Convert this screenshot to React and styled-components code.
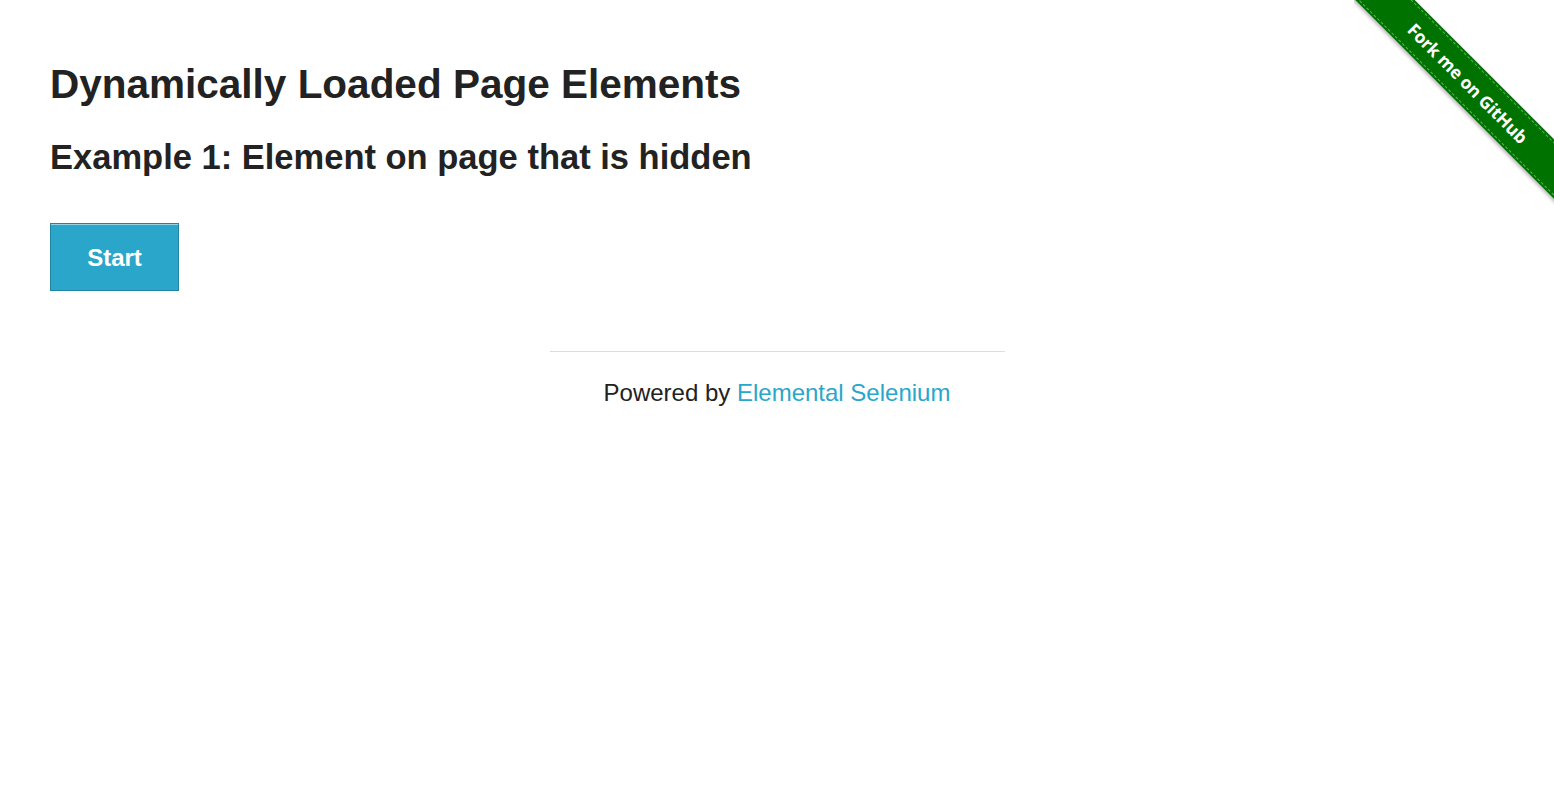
import React from "react";
import styled, { createGlobalStyle } from "styled-components";

const Global = createGlobalStyle`
  html, body { margin: 0; padding: 0; background: #fff; }
  body {
    font-family: "Liberation Sans", Arial, Helvetica, sans-serif;
    color: #222;
  }
`;

const Page = styled.div`
  position: relative;
  min-height: 792px;
  overflow: hidden;
`;

const Content = styled.div`
  padding: 56px 50px 0;
`;

const Title = styled.h3`
  margin: 0;
  font-size: 40.5px;
  line-height: 56.7px;
  font-weight: bold;
  color: #222;
`;

const Subtitle = styled.h4`
  margin: 20px 0 0;
  font-size: 34.5px;
  line-height: 48.3px;
  font-weight: bold;
  color: #222;
`;

const StartButton = styled.button`
  margin-top: 42px;
  display: block;
  width: 129px;
  height: 68px;
  padding: 2px 0 0;
  border: 1px solid #2284a1;
  background: #2ba6cb;
  box-shadow: inset 0 1px 0 rgba(255, 255, 255, 0.5);
  color: #fff;
  font-family: "Liberation Sans", Arial, sans-serif;
  font-size: 24px;
  font-weight: bold;
  cursor: pointer;
`;

const Footer = styled.div`
  width: 455px;
  margin: 60px auto 0;
`;

const Rule = styled.hr`
  margin: 0;
  border: 0;
  border-top: 1px solid #ddd;
  height: 0;
`;

const FooterText = styled.div`
  text-align: center;
  margin-top: 23px;
  font-size: 24px;
  line-height: 36px;
  color: #222;
`;

const Link = styled.a`
  color: #2ba6cb;
  text-decoration: none;
`;

const RibbonCorner = styled.div`
  position: absolute;
  top: 0;
  right: 0;
  width: 200px;
  height: 205px;
  overflow: hidden;
  pointer-events: none;
`;

const Ribbon = styled.a`
  position: absolute;
  left: -36px;
  top: 62px;
  width: 300px;
  height: 42px;
  transform: rotate(45deg);
  background: #007200;
  box-shadow: 0 2px 4px rgba(0, 0, 0, 0.3);
  display: flex;
  align-items: center;
  justify-content: center;
  color: #fff;
  text-decoration: none;
  font-family: "Open Sans", "Liberation Sans", sans-serif;
  font-weight: bold;
  font-size: 17.5px;
  letter-spacing: -0.2px;
  &::before {
    content: "";
    position: absolute;
    left: 0;
    right: 0;
    top: 2px;
    bottom: 2px;
    border-top: 1px dashed rgba(255, 255, 255, 0.4);
    border-bottom: 1px dashed rgba(255, 255, 255, 0.4);
  }
`;

export default function App() {
  return (
    <Page>
      <Global />
      <Content>
        <Title>Dynamically Loaded Page Elements</Title>
        <Subtitle>Example 1: Element on page that is hidden</Subtitle>
        <StartButton>Start</StartButton>
      </Content>
      <Footer>
        <Rule />
        <FooterText>
          Powered by <Link href="#">Elemental Selenium</Link>
        </FooterText>
      </Footer>
      <RibbonCorner>
        <Ribbon href="#">Fork me on GitHub</Ribbon>
      </RibbonCorner>
    </Page>
  );
}
